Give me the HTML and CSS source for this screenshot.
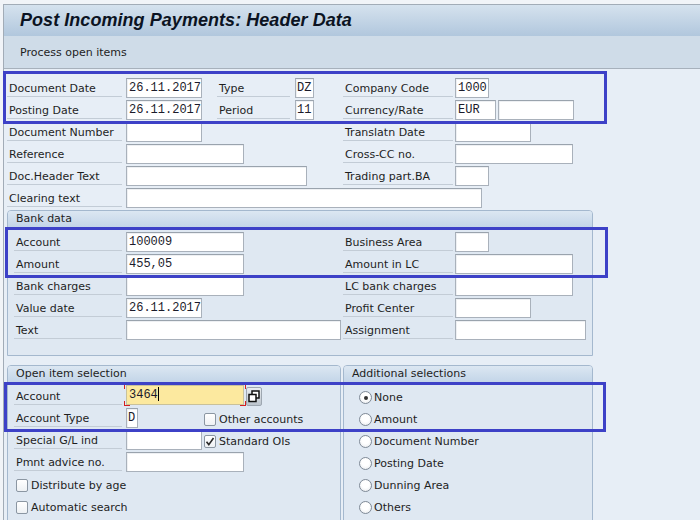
FILE: index.html
```html
<!DOCTYPE html>
<html>
<head>
<meta charset="utf-8">
<title>Post Incoming Payments: Header Data</title>
<link rel="stylesheet" href="styles.css">
</head>
<body>
<div class="window">
  <div class="titlebar"><h1>Post Incoming Payments: Header Data</h1></div>
  <div class="toolbar">Process open items</div>
  <div class="content">
    <div class="row">
      <div class="half top">
        <span class="lab lw">Document Date</span>
        <span class="fld w76">26.11.2017</span>
        <span class="lab sub">Type</span>
        <span class="fld w18">DZ</span>
      </div>
      <span class="lab rw">Company Code</span>
      <span class="fld w34">1000</span>
    </div>
    <div class="row">
      <div class="half top">
        <span class="lab lw">Posting Date</span>
        <span class="fld w76">26.11.2017</span>
        <span class="lab sub">Period</span>
        <span class="fld w18">11</span>
      </div>
      <span class="lab rw">Currency/Rate</span>
      <span class="fld w41">EUR</span>
      <span class="fld w76 ml2"></span>
    </div>
    <div class="row">
      <div class="half top">
        <span class="lab lw">Document Number</span>
        <span class="fld w76"></span>
      </div>
      <span class="lab rw">Translatn Date</span>
      <span class="fld w76"></span>
    </div>
    <div class="row">
      <div class="half top">
        <span class="lab lw">Reference</span>
        <span class="fld w118"></span>
      </div>
      <span class="lab rw">Cross-CC no.</span>
      <span class="fld w118"></span>
    </div>
    <div class="row">
      <div class="half top">
        <span class="lab lw">Doc.Header Text</span>
        <span class="fld w181"></span>
      </div>
      <span class="lab rw">Trading part.BA</span>
      <span class="fld w34"></span>
    </div>
    <div class="row">
      <span class="lab lw">Clearing text</span>
      <span class="fld w356"></span>
    </div>

    <section class="group bank">
      <div class="ghead">Bank data</div>
      <div class="gbody">
        <div class="row">
          <div class="half in">
            <span class="lab gw">Account</span>
            <span class="fld w118">100009</span>
          </div>
          <span class="lab rw">Business Area</span>
          <span class="fld w34"></span>
        </div>
        <div class="row">
          <div class="half in">
            <span class="lab gw">Amount</span>
            <span class="fld w118">455,05</span>
          </div>
          <span class="lab rw">Amount in LC</span>
          <span class="fld w118"></span>
        </div>
        <div class="row">
          <div class="half in">
            <span class="lab gw">Bank charges</span>
            <span class="fld w118"></span>
          </div>
          <span class="lab rw">LC bank charges</span>
          <span class="fld w118"></span>
        </div>
        <div class="row">
          <div class="half in">
            <span class="lab gw">Value date</span>
            <span class="fld w76">26.11.2017</span>
          </div>
          <span class="lab rw">Profit Center</span>
          <span class="fld w76"></span>
        </div>
        <div class="row">
          <div class="half in">
            <span class="lab gw">Text</span>
            <span class="fld w215"></span>
          </div>
          <span class="lab rw">Assignment</span>
          <span class="fld w131"></span>
        </div>
      </div>
    </section>

    <div class="grouprow">
      <section class="group open">
        <div class="ghead">Open item selection</div>
        <div class="gbody">
          <div class="row">
            <span class="lab gw">Account</span>
            <span class="req"><span class="fld w118 yellow">3464<span class="caret"></span></span></span>
            <span class="copybtn"><svg width="16" height="19" viewBox="0 0 16 19"><rect x="6" y="4" width="7" height="7" fill="#fff" stroke="#111" stroke-width="1.5"/><rect x="3" y="7.5" width="7" height="7" fill="#fff" stroke="#111" stroke-width="1.5"/></svg></span>
          </div>
          <div class="row">
            <span class="lab gw">Account Type</span>
            <span class="slot"><span class="fld w12">D</span></span>
            <span class="cb"></span><span class="cbtext">Other accounts</span>
          </div>
          <div class="row">
            <span class="lab gw">Special G/L ind</span>
            <span class="slot"><span class="fld w76"></span></span>
            <span class="cb"><svg width="10" height="11" viewBox="0 0 10 11"><path d="M1.5 5.8 L3.8 8.6 L8.5 2" fill="none" stroke="#2a2a2a" stroke-width="1.6"/></svg></span><span class="cbtext">Standard OIs</span>
          </div>
          <div class="row">
            <span class="lab gw">Pmnt advice no.</span>
            <span class="fld w118"></span>
          </div>
          <div class="row">
            <span class="cb first"></span><span class="cbtext">Distribute by age</span>
          </div>
          <div class="row">
            <span class="cb first"></span><span class="cbtext">Automatic search</span>
          </div>
        </div>
      </section>
      <section class="group addl">
        <div class="ghead">Additional selections</div>
        <div class="gbody">
          <div class="row"><span class="radio on"></span><span class="cbtext">None</span></div>
          <div class="row"><span class="radio"></span><span class="cbtext">Amount</span></div>
          <div class="row"><span class="radio"></span><span class="cbtext">Document Number</span></div>
          <div class="row"><span class="radio"></span><span class="cbtext">Posting Date</span></div>
          <div class="row"><span class="radio"></span><span class="cbtext">Dunning Area</span></div>
          <div class="row"><span class="radio"></span><span class="cbtext">Others</span></div>
        </div>
      </section>
    </div>
  </div>
</div>

<div class="hl hl1"></div>
<div class="hl hl2"></div>
<div class="hl hl3"></div>
</body>
</html>
```

FILE: styles.css
```css
* { box-sizing: border-box; }

html, body {
  margin: 0;
  padding: 0;
}

body {
  width: 700px;
  height: 520px;
  overflow: hidden;
  position: relative;
  background: #f1f4f8;
  font-family: "DejaVu Sans", sans-serif;
  font-size: 11px;
  color: #1e1e1e;
}

.window {
  margin: 4px 0 0 3px;
  border-top: 1px solid #a2acb7;
  border-left: 1px solid #a2acb7;
  background: #e7eef6;
  height: 516px;
}

.titlebar {
  height: 31px;
  background: linear-gradient(#d5e2ee, #b1c7dd);
}

.titlebar h1 {
  margin: 0;
  padding-left: 16px;
  font-family: "Liberation Sans", Arial, sans-serif;
  font-style: italic;
  font-weight: bold;
  font-size: 18px;
  line-height: 31px;
  color: #0b1322;
  letter-spacing: 0.05px;
}

.toolbar {
  height: 33px;
  background: #cfdce8;
  border-bottom: 1px solid #a7b1bc;
  padding-left: 16px;
  line-height: 33px;
  color: #1e1e1e;
}

.content {
  padding: 8px 0 0 3px;
}

.row {
  display: flex;
  align-items: flex-start;
  height: 22px;
}

.half {
  display: flex;
  align-items: flex-start;
  flex-shrink: 0;
}

.half.top { width: 336px; }
.half.in { width: 329px; }

.lab {
  display: block;
  flex-shrink: 0;
  margin-top: 1px;
  height: 19px;
  line-height: 21px;
  padding-left: 2px;
  border-bottom: 1px solid #c3ccd6;
  white-space: nowrap;
}

.lw { width: 115px; margin-right: 4px; }
.gw { width: 108px; margin-right: 4px; }
.rw { width: 110px; margin-right: 2px; }
.sub { width: 73px; margin-left: 15px; margin-right: 5px; }

.fld {
  display: block;
  flex-shrink: 0;
  margin-top: 1px;
  height: 20px;
  background: #fff;
  border: 1px solid #a9b1bb;
  border-top-color: #9aa3ad;
  box-shadow: inset 1px 1px 0 #eef0f3;
  font-family: "Liberation Mono", "DejaVu Sans Mono", monospace;
  font-size: 12px;
  line-height: 19px;
  padding-left: 2px;
  color: #1b1b2b;
  white-space: nowrap;
  overflow: hidden;
}

.ml2 { margin-left: 2px; }
.w12 { width: 12px; padding-left: 1px; }
.w18 { width: 19px; padding-left: 1px; }
.w34 { width: 34px; }
.w41 { width: 41px; }
.w76 { width: 76px; }
.w118 { width: 118px; }
.w131 { width: 131px; }
.w181 { width: 181px; }
.w215 { width: 215px; }
.w356 { width: 356px; }

/* groups */
.group {
  border: 1px solid #a4b8ce;
  border-radius: 4px 4px 0 0;
  background: #dfe8f2;
}

.ghead {
  height: 16px;
  line-height: 16px;
  padding-left: 8px;
  background: linear-gradient(#dce7f2, #c3d5e8);
  border-radius: 3px 3px 0 0;
  color: #1e1e1e;
}

.bank {
  width: 586px;
  margin-top: 1px;
}

.bank .gbody {
  padding: 4px 0 14px 6px;
}

.grouprow {
  display: flex;
  gap: 2px;
  margin-top: 9px;
}

.open {
  width: 334px;
  height: 170px;
}

.addl {
  width: 250px;
  height: 170px;
}

.open .gbody {
  padding: 3px 0 0 6px;
}

.addl .gbody {
  padding: 3px 0 0 15px;
}

/* required yellow field with red corners */
.req {
  display: block;
  margin-left: -2px;
  margin-top: -1px;
  padding: 1px 2px 1px 2px;
  flex-shrink: 0;
  background:
    linear-gradient(#d42020, #d42020) left top / 6px 1px no-repeat,
    linear-gradient(#d42020, #d42020) left top / 1px 5px no-repeat,
    linear-gradient(#d42020, #d42020) right top / 6px 1px no-repeat,
    linear-gradient(#d42020, #d42020) right top / 1px 5px no-repeat,
    linear-gradient(#d42020, #d42020) left bottom / 6px 1px no-repeat,
    linear-gradient(#d42020, #d42020) left bottom / 1px 5px no-repeat,
    linear-gradient(#d42020, #d42020) right bottom / 6px 1px no-repeat,
    linear-gradient(#d42020, #d42020) right bottom / 1px 5px no-repeat;
}

.yellow {
  background: #fce99f;
  border-color: #c9c19a;
  box-shadow: none;
  margin-top: 0;
}

.caret {
  display: inline-block;
  width: 1px;
  height: 14px;
  background: #000;
  vertical-align: -3px;
}

.copybtn {
  display: block;
  flex-shrink: 0;
  margin-top: 2px;
  width: 16px;
  height: 19px;
  border: 1px solid #9ea7b1;
  border-radius: 2px;
  background: linear-gradient(#e9edf1, #bcc4cd);
  line-height: 0;
}

.copybtn svg {
  margin: -1px 0 0 -1px;
}

.slot {
  display: block;
  width: 78px;
  flex-shrink: 0;
}

.cb {
  display: block;
  flex-shrink: 0;
  width: 12px;
  height: 13px;
  margin-top: 6px;
  border: 1px solid #8b96a2;
  border-radius: 2px;
  background: linear-gradient(#ffffff, #eef1f4);
  line-height: 0;
}

.cb.first { margin-left: 2px; }

.cbtext {
  display: block;
  margin-left: 3px;
  line-height: 25px;
  white-space: nowrap;
}

.radio {
  display: block;
  flex-shrink: 0;
  width: 13px;
  height: 13px;
  margin-top: 6px;
  border: 1px solid #7f8a97;
  border-radius: 50%;
  background: radial-gradient(circle at 50% 40%, #ffffff 40%, #e3e7eb);
  position: relative;
}

.radio.on::after {
  content: "";
  position: absolute;
  left: 3.5px;
  top: 3.5px;
  width: 4px;
  height: 4px;
  border-radius: 50%;
  background: #333;
}

.radio + .cbtext { margin-left: 2px; }

/* blue highlight overlays */
.hl {
  position: absolute;
  border: 3px solid #3d41c7;
  pointer-events: none;
}

.hl1 { left: 3px; top: 71px; width: 604px; height: 53px; }
.hl2 { left: 5px; top: 227px; width: 603px; height: 51px; }
.hl3 { left: 4px; top: 382px; width: 602px; height: 50px; }
```
